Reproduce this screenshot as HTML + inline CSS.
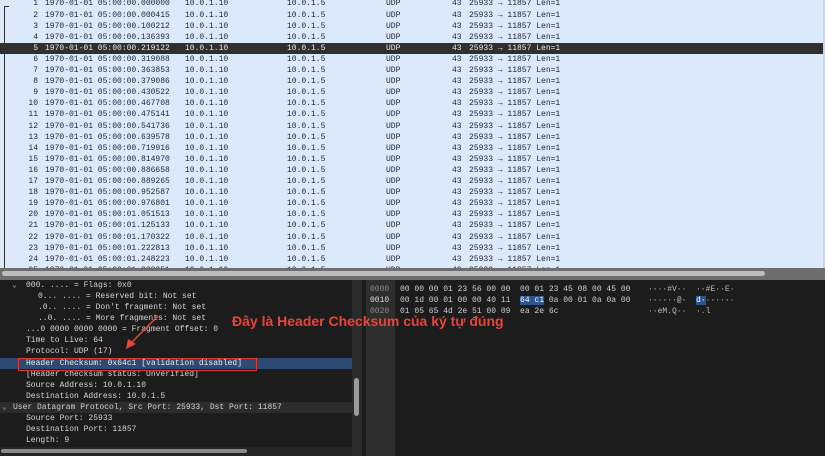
<!DOCTYPE html>
<html><head><meta charset="utf-8"><style>
*{margin:0;padding:0;box-sizing:border-box}
body{width:825px;height:456px;overflow:hidden;background:#1c1c1c;font-family:"Liberation Mono",monospace;font-size:8px;position:relative}
#top{position:absolute;left:0;top:0;width:825px;height:268px;background:#dce9fb;overflow:hidden;border-right:2px solid #c8d4e4}
.r{position:absolute;left:0;width:823px;height:11.1px;line-height:11.1px;color:#1d2633;white-space:pre}
.r.s{background:#2f2f2f;color:#e8e8e8}
.r span{position:absolute}
.no{right:787px;text-align:right}
#sb{position:absolute;left:0;top:268px;width:825px;height:12px;background:#6e6e6e}
#sb div{position:absolute;left:2px;top:3px;width:763px;height:5px;border-radius:3px;background:#bdbdbd}
#left{position:absolute;left:0;top:280px;width:352px;height:176px;background:#1c1c1c;overflow:hidden}
.d{position:absolute;left:0;width:352px;height:11.1px;line-height:11.1px;color:#d4d4d4;white-space:pre}
#vs{position:absolute;left:352px;top:280px;width:10px;height:176px;background:#2b2b2b}
#vs div{position:absolute;left:2px;top:98px;width:5px;height:38px;border-radius:3px;background:#9a9a9a}
#off{position:absolute;left:366px;top:280px;width:29px;height:176px;background:#2e2e2e}
.h{position:absolute;white-space:pre;color:#d0d0d0;line-height:11px}
</style></head><body>
<div id="top"></div>
<div style="position:absolute;left:4px;top:6px;width:5px;height:262px;border-left:1px solid #333;border-top:1px solid #333"></div>
<div id="sb"><div></div></div>
<div id="left">
<div class="d" style="top:0"><span style="position:absolute;left:12px;color:#aaa">⌄</span><span style="position:absolute;left:26px">000. .... = Flags: 0x0</span></div>
<div class="d" style="top:11px"><span style="position:absolute;left:38px">0... .... = Reserved bit: Not set</span></div>
<div class="d" style="top:22px"><span style="position:absolute;left:38px">.0.. .... = Don't fragment: Not set</span></div>
<div class="d" style="top:33px"><span style="position:absolute;left:38px">..0. .... = More fragments: Not set</span></div>
<div class="d" style="top:44px"><span style="position:absolute;left:26px">...0 0000 0000 0000 = Fragment Offset: 0</span></div>
<div class="d" style="top:55px"><span style="position:absolute;left:26px">Time to Live: 64</span></div>
<div class="d" style="top:66px"><span style="position:absolute;left:26px">Protocol: UDP (17)</span></div>
<div class="d" style="top:78px;background:#2c4a72;color:#e8eef6"><span style="position:absolute;left:26px">Header Checksum: 0x64c1 [validation disabled]</span></div>
<div class="d" style="top:89px"><span style="position:absolute;left:26px">[Header checksum status: Unverified]</span></div>
<div class="d" style="top:100px"><span style="position:absolute;left:26px">Source Address: 10.0.1.10</span></div>
<div class="d" style="top:111px"><span style="position:absolute;left:26px">Destination Address: 10.0.1.5</span></div>
<div class="d" style="top:122px;background:#2c2c2c"><span style="position:absolute;left:2px;color:#aaa">⌄</span><span style="position:absolute;left:13px">User Datagram Protocol, Src Port: 25933, Dst Port: 11857</span></div>
<div class="d" style="top:133px"><span style="position:absolute;left:26px">Source Port: 25933</span></div>
<div class="d" style="top:144px"><span style="position:absolute;left:26px">Destination Port: 11857</span></div>
<div class="d" style="top:155px"><span style="position:absolute;left:26px">Length: 9</span></div>
<div style="position:absolute;left:0;top:167px;width:352px;height:9px;background:#262626"><div style="position:absolute;left:1px;top:2px;width:246px;height:4px;border-radius:2px;background:#8a8a8a"></div></div>
</div>
<div style="position:absolute;left:18px;top:358px;width:239px;height:13px;border:1.5px solid #e0392f"></div>
<div id="vs"><div></div></div>
<div id="off"></div>
<div class="h" style="left:370px;top:284px;color:#8a8a8a">0000<br><span style="color:#ddd">0010</span><br>0020</div>
<div class="h" style="left:400px;top:284px">00 00 00 01 23 56 00 00  00 01 23 45 08 00 45 00<br>00 1d 00 01 00 00 40 11  <span style="background:#2c5590;color:#fff">64 c1</span> 0a 00 01 0a 0a 00<br>01 05 65 4d 2e 51 00 09  ea 2e 6c</div>
<div class="h" style="left:648px;top:284px;color:#bbb">····#V··  ··#E··E·<br>······@·  <span style="background:#2c5590;color:#fff">d·</span>······<br>··eM.Q··  ·.l</div>
<div style="position:absolute;left:232px;top:313px;color:#e8453c;font:bold 14px 'Liberation Sans',sans-serif;white-space:nowrap">Đây là Header Checksum của ký tự đúng</div>
<svg style="position:absolute;left:0;top:0" width="825" height="456"><line x1="158" y1="316" x2="130" y2="344" stroke="#e8453c" stroke-width="1.5"/><polygon points="126,349 128,339 136,344" fill="#e8453c"/></svg>
<script>
var t=["0.000000","0.000415","0.100212","0.136393","0.219122","0.319088","0.363853","0.379086","0.430522","0.467708","0.475141","0.541736","0.639578","0.719916","0.814970","0.886658","0.889265","0.952587","0.976801","1.051513","1.125133","1.170322","1.222813","1.248223","1.298251"];
var h="";for(var i=0;i<25;i++){var y=-1.6+i*11.1;h+='<div class="r'+(i==4?' s':'')+'" style="top:'+y+'px"><span style="left:0;width:38px;text-align:right">'+(i+1)+'</span><span style="left:45px">1970-01-01 05:00:0'+t[i]+'</span><span style="left:185px">10.0.1.10</span><span style="left:287px">10.0.1.5</span><span style="left:386px">UDP</span><span style="left:452px">43</span><span style="left:469px">25933 → 11857 Len=1</span></div>';}
document.getElementById("top").innerHTML=h;
</script>
</body></html>
